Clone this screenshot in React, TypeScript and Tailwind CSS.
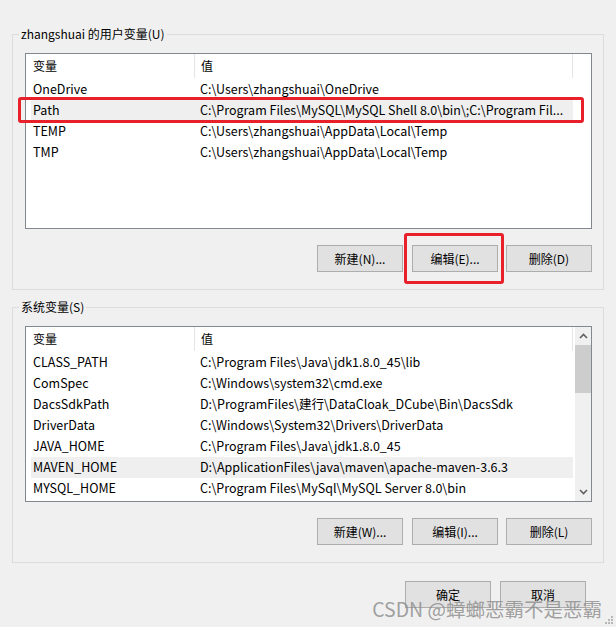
const font = { fontFamily: '"Noto Sans CJK SC", "Noto Sans", sans-serif' };

type Row = { name: string; value: string; selected?: boolean };

const userVars: Row[] = [
  { name: 'OneDrive', value: 'C:\\Users\\zhangshuai\\OneDrive' },
  { name: 'Path', value: 'C:\\Program Files\\MySQL\\MySQL Shell 8.0\\bin\\;C:\\Program Fil...', selected: true },
  { name: 'TEMP', value: 'C:\\Users\\zhangshuai\\AppData\\Local\\Temp' },
  { name: 'TMP', value: 'C:\\Users\\zhangshuai\\AppData\\Local\\Temp' },
];

const sysVars: Row[] = [
  { name: 'CLASS_PATH', value: 'C:\\Program Files\\Java\\jdk1.8.0_45\\lib' },
  { name: 'ComSpec', value: 'C:\\Windows\\system32\\cmd.exe' },
  { name: 'DacsSdkPath', value: 'D:\\ProgramFiles\\建行\\DataCloak_DCube\\Bin\\DacsSdk' },
  { name: 'DriverData', value: 'C:\\Windows\\System32\\Drivers\\DriverData' },
  { name: 'JAVA_HOME', value: 'C:\\Program Files\\Java\\jdk1.8.0_45' },
  { name: 'MAVEN_HOME', value: 'D:\\ApplicationFiles\\java\\maven\\apache-maven-3.6.3', selected: true },
  { name: 'MYSQL_HOME', value: 'C:\\Program Files\\MySql\\MySQL Server 8.0\\bin' },
];

function WinButton({ label }: { label: string }) {
  return (
    <button className="flex h-[27px] w-[86px] items-center justify-center border border-[#adadad] bg-[#e1e1e1] text-[12px] text-black">
      {label}
    </button>
  );
}

function Chevron({ up }: { up?: boolean }) {
  return (
    <svg width="9" height="6" viewBox="0 0 9 6">
      <polyline
        points={up ? '1,5 4.5,1.5 8,5' : '1,1 4.5,4.5 8,1'}
        fill="none"
        stroke="#606060"
        strokeWidth="1.6"
      />
    </svg>
  );
}

function ListView({ rows, scroll }: { rows: Row[]; scroll?: boolean }) {
  return (
    <div className="flex h-[176px] w-[567px] border border-[#828790] bg-white">
      <div className="flex w-[548px] flex-col">
        <div className="flex h-[25px] items-start text-[12px]">
          <div className="flex h-[24px] w-[169px] items-center border-r border-[#e5e5e5] pl-[7px]">变量</div>
          <div className="flex h-[24px] w-[378px] items-center border-r border-[#e5e5e5] pl-[6px]">值</div>
        </div>
        {rows.map((r) => (
          <div key={r.name} className="flex h-[21px] items-center pl-[5px] text-[12.5px]">
            <div className={`flex h-[21px] w-[542px] items-center ${r.selected ? 'bg-[#efefef]' : ''}`}>
              <div className="w-[163px] truncate pl-[2px]">{r.name}</div>
              <div className="truncate pl-[6px] whitespace-nowrap">{r.value}</div>
            </div>
          </div>
        ))}
      </div>
      {scroll && (
        <div className="ml-auto flex w-[16px] flex-col items-center bg-[#f0f0f0]">
          <div className="flex h-[18px] items-center justify-center">
            <Chevron up />
          </div>
          <div className="h-[48px] w-[16px] bg-[#cdcdcd]" />
          <div className="flex-1" />
          <div className="flex h-[18px] items-center justify-center">
            <Chevron />
          </div>
        </div>
      )}
    </div>
  );
}

function GroupBox({
  title,
  rows,
  buttons,
  scroll,
  className,
}: {
  title: string;
  rows: Row[];
  buttons: string[];
  scroll?: boolean;
  className: string;
}) {
  return (
    <fieldset className={`ml-[12px] w-[592px] border border-[#dcdcdc] ${className}`}>
      <legend className="ml-[6px] px-[2px] text-[12px] leading-[16px] text-black">{title}</legend>
      <div className="pt-[11px] pl-[12px] pb-[17px]">
        <ListView rows={rows} scroll={scroll} />
        <div className="mt-[16px] flex w-[567px] justify-end gap-[8px]">
          {buttons.map((b, i) => (
            <div key={b} className={i === 0 ? 'mr-[1px]' : ''}>
              <WinButton label={b} />
            </div>
          ))}
        </div>
      </div>
    </fieldset>
  );
}

export default function App() {
  return (
    <div className="relative h-[627px] w-[616px] overflow-hidden bg-[#f0f0f0] text-black" style={font}>
      <GroupBox
        title="zhangshuai 的用户变量(U)"
        rows={userVars}
        buttons={['新建(N)...', '编辑(E)...', '删除(D)']}
        className="mt-[26px]"
      />
      <GroupBox
        title="系统变量(S)"
        rows={sysVars}
        buttons={['新建(W)...', '编辑(I)...', '删除(L)']}
        scroll
        className="mt-[9px]"
      />
      <div className="mt-[18px] flex justify-end gap-[9px] pr-[30px]">
        <WinButton label="确定" />
        <WinButton label="取消" />
      </div>

      {/* red annotation boxes */}
      <div className="absolute top-[97px] left-[18px] h-[26px] w-[566px] rounded-[3px] border-[3px] border-[#e8202a]" />
      <div className="absolute top-[233px] left-[404px] h-[51px] w-[100px] rounded-[3px] border-[3px] border-[#e8202a]" />

      {/* watermark */}
      <div className="absolute right-[14px] bottom-[8px] text-[19.5px] leading-[20px] whitespace-nowrap text-[#8a8a8a]/80">
        CSDN @蟑螂恶霸不是恶霸
      </div>

      {/* resize grip */}
      <svg className="absolute right-[3px] bottom-[3px]" width="8" height="8" viewBox="0 0 8 8">
        <rect x="6" y="0" width="2" height="2" fill="#b8b8b8" />
        <rect x="3" y="3" width="2" height="2" fill="#b8b8b8" />
        <rect x="6" y="3" width="2" height="2" fill="#b8b8b8" />
        <rect x="0" y="6" width="2" height="2" fill="#b8b8b8" />
        <rect x="3" y="6" width="2" height="2" fill="#b8b8b8" />
        <rect x="6" y="6" width="2" height="2" fill="#b8b8b8" />
      </svg>
    </div>
  );
}
